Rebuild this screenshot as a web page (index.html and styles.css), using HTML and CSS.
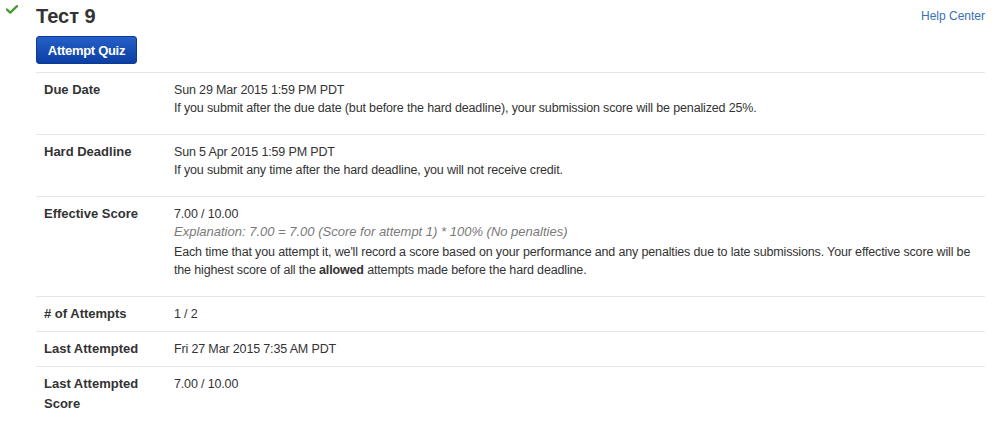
FILE: index.html
```html
<!DOCTYPE html>
<html>
<head>
<meta charset="utf-8">
<link rel="stylesheet" href="styles.css">
</head>
<body>
<div class="page">
  <svg class="check" width="12" height="9" viewBox="0 0 12 9"><path d="M1 4.6 L4.3 7.6 L11 1.2" fill="none" stroke="#4e9a2c" stroke-width="2.4" stroke-linecap="round" stroke-linejoin="round"/></svg>
  <div class="main">
    <div class="header">
      <h1 class="title">Тест 9</h1>
      <a class="help" href="#">Help Center</a>
    </div>
    <button class="btn">Attempt Quiz</button>
    <div class="table">
      <div class="row">
        <div class="label">Due Date</div>
        <div class="value">Sun 29 Mar 2015 1:59 PM PDT<p class="desc">If you submit after the due date (but before the hard deadline), your submission score will be penalized 25%.</p></div>
      </div>
      <div class="row">
        <div class="label">Hard Deadline</div>
        <div class="value">Sun 5 Apr 2015 1:59 PM PDT<p class="desc">If you submit any time after the hard deadline, you will not receive credit.</p></div>
      </div>
      <div class="row">
        <div class="label">Effective Score</div>
        <div class="value">7.00 / 10.00<div class="explain">Explanation: 7.00 = 7.00 (Score for attempt 1) * 100% (No penalties)</div><p class="desc">Each time that you attempt it, we'll record a score based on your performance and any penalties due to late submissions. Your effective score will be the highest score of all the <b>allowed</b> attempts made before the hard deadline.</p></div>
      </div>
      <div class="row">
        <div class="label"># of Attempts</div>
        <div class="value">1 / 2</div>
      </div>
      <div class="row">
        <div class="label">Last Attempted</div>
        <div class="value">Fri 27 Mar 2015 7:35 AM PDT</div>
      </div>
      <div class="row">
        <div class="label">Last Attempted<br>Score</div>
        <div class="value">7.00 / 10.00</div>
      </div>
    </div>
  </div>
</div>
</body>
</html>
```
FILE: styles.css
```css
* { box-sizing: border-box; }
body {
  margin: 0;
  background: #fff;
  font-family: "Liberation Sans", Arial, sans-serif;
  color: #333;
  font-size: 13px;
}
.page {
  display: flex;
  padding: 0 15px 0 6px;
}
.check {
  margin-top: 5px;
  flex: none;
}
.main {
  flex: 1;
  margin-left: 18px;
}
.header {
  display: flex;
  justify-content: space-between;
  align-items: flex-start;
}
.title {
  margin: 4px 0 0;
  font-size: 20px;
  line-height: 24px;
  font-weight: bold;
  color: #333;
}
.help {
  margin-top: 9px;
  font-size: 12px;
  line-height: 14px;
  color: #3a6fb5;
  text-decoration: none;
}
.btn {
  display: block;
  margin-top: 8px;
  width: 101px;
  height: 28px;
  border: 1px solid #0b3a95;
  border-radius: 3px;
  background: linear-gradient(#2460c8, #0c3ea3);
  color: #fff;
  font-family: "Liberation Sans", Arial, sans-serif;
  font-size: 13px;
  font-weight: bold;
  letter-spacing: -0.3px;
  padding: 0;
}
.table {
  margin-top: 8px;
}
.row {
  display: grid;
  grid-template-columns: 138px 1fr;
  border-top: 1px solid #e6e6e6;
  padding: 8px 0 8px;
  line-height: 18px;
}
.label {
  padding-left: 8px;
  font-weight: bold;
  line-height: 20px;
  margin: -1px 0 -1px;
}
.value {
  font-size: 12.5px;
  letter-spacing: -0.15px;
}
.desc {
  margin: 0 0 9px;
  padding-right: 4px;
}
.explain {
  font-style: italic;
  font-size: 13px;
  letter-spacing: 0;
  color: #7a7a7a;
  margin-bottom: 2px;
}
```
